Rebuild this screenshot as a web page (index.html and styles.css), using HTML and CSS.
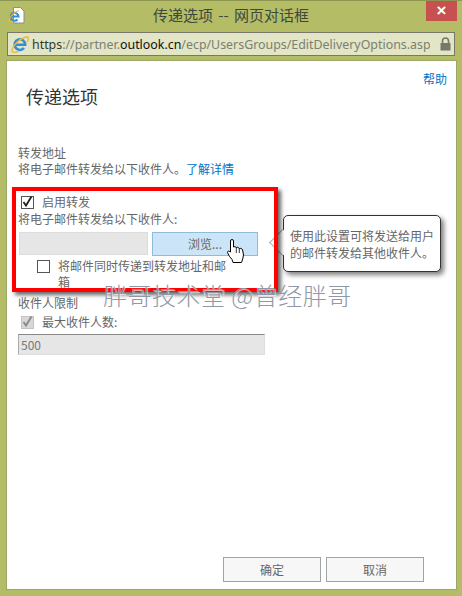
FILE: index.html
```html
<!DOCTYPE html>
<html lang="zh-CN">
<head>
  <meta charset="UTF-8">
  <title>传递选项 -- 网页对话框</title>
  <link rel="stylesheet" href="styles.css">
</head>
<body>
  <div class="window">
    <div class="titlebar">
      <svg class="page-icon" width="17" height="17" viewBox="0 0 17 17">
        <path d="M5.5 .5h7l3.5 3.5v12h-10.500z" fill="#fff" stroke="#8a8f90"/>
        <path d="M2.500 9.500h8a4 4 0 1 0 -1 3" fill="none" stroke="#2f8fd8" stroke-width="2"/>
        <path d="M.8 14c0-3 5-9 10-10.500M.8 14c1 1.500 3 1 4.500 .2" fill="none" stroke="#f2b632" stroke-width="1.200"/>
      </svg>
      <div class="title">传递选项 -- 网页对话框</div>
      <div class="close">×</div>
    </div>
    <div class="addressbar">
      <svg class="ie-icon" width="18" height="18" viewBox="0 0 18 18">
        <path d="M3.800 9.800h10.400a5.300 5.300 0 1 0 -1.200 3.200" fill="none" stroke="#2f8fd8" stroke-width="2.600"/>
        <path d="M.8 16c0-4 7-12 14-14 3-1 3 2 1.500 5M.8 16c1 2 4 1.500 6.500 .3" fill="none" stroke="#f2b632" stroke-width="1.400"/>
      </svg>
      <div class="url"><span class="dim-dark">https</span><span class="dim">://partner.</span><span class="host">outlook.cn</span><span class="dim">/ecp/UsersGroups/EditDeliveryOptions.aspx</span></div>
      <svg class="lock" width="11" height="14" viewBox="0 0 11 14">
        <path d="M2.500 6V4a3 3 0 0 1 6 0v2" fill="none" stroke="#77776a" stroke-width="1.600"/>
        <rect x="0.500" y="6" width="10" height="7.500" fill="#77776a"/>
      </svg>
    </div>
    <div class="content">
      <a class="help">帮助</a>
      <h1>传递选项</h1>
      <div class="section-title">转发地址</div>
      <div class="line">将电子邮件转发给以下收件人。<a class="link">了解详情</a></div>

      <div class="highlight">
        <label class="check-row">
          <span class="check"><svg class="tick" width="13" height="13" viewBox="0 0 13 13"><path d="M2.500 6l2.500 3.500L10.500 .5" fill="none" stroke="#222" stroke-width="1.800"/></svg></span>
          启用转发
        </label>
        <div class="line">将电子邮件转发给以下收件人:</div>
        <div class="browse-row">
          <div class="input-empty"></div>
          <div class="browse">浏览...</div>
        </div>
        <label class="check-row wrap"><span class="check"></span><span class="wrap-text">将邮件同时传递到转发地址和邮箱</span></label>
        <svg class="cursor" width="17" height="24" viewBox="0 0 17 24">
          <path d="M3.500 13V2Q3.500 .5 5 .5T6.500 2V8Q8 7 9.300 8.500 10.800 7.500 12.300 9.500 13.800 8.800 15.500 10.500L16.500 16Q16 20 14.500 23.500H6L5 20.500Q2 17.500 .5 13.500 .5 11 3.500 13Z" fill="#fff" stroke="#000"/>
          <path d="M9.300 8.500V14M12.300 9.500V14" fill="none" stroke="#000" stroke-width="0.800"/>
        </svg>
      </div>

      <div class="tooltip">
        <span class="tip-arrow"></span>
        <span class="tip-text">使用此设置可将发送给用户的邮件转发给其他收件人。</span>
      </div>

      <div class="watermark">胖哥技术堂 @曾经胖哥</div>

      <div class="section-title limit">收件人限制</div>
      <label class="check-row disabled">
        <span class="check disabled-box"><svg class="tick" width="13" height="13" viewBox="0 0 13 13"><path d="M2.500 6l2.500 3.500L10.500 .5" fill="none" stroke="#888" stroke-width="1.800"/></svg></span>
        最大收件人数:
      </label>
      <div class="input-value">500</div>

      <div class="actions">
        <div class="action">确定</div>
        <div class="action">取消</div>
      </div>
    </div>
  </div>
</body>
</html>
```

FILE: styles.css
```css
* {
  box-sizing: border-box;
}
html, body {
  margin: 0;
  height: 100%;
}
body {
  font-family: "Noto Sans CJK SC", "Liberation Sans", sans-serif;
  font-size: 12px;
  color: #666;
}
.window {
  width: 462px;
  height: 596px;
  background: #b5bc66;
  border-top: 1px solid #8d9650;
  overflow: hidden;
}
.titlebar {
  height: 31px;
  display: flex;
  align-items: center;
  position: relative;
  padding-left: 8px;
}
.page-icon {
  margin-top: -2px;
}
.title {
  position: absolute;
  left: 0;
  right: 0;
  text-align: center;
  font-size: 15px;
  word-spacing: 2px;
  color: #3c4a3c;
  margin-top: -4px;
}
.close {
  position: absolute;
  top: 0;
  right: 5px;
  width: 31px;
  height: 20px;
  background: #c75050;
  color: #fff;
  font: bold 17px/19px "Liberation Sans", sans-serif;
  text-align: center;
}
.addressbar {
  height: 24px;
  margin: 0 7px;
  background: #e2e5c6;
  border: 1px solid #77776a;
  display: flex;
  align-items: center;
  padding-left: 3px;
  gap: 3px;
}
.url {
  flex: 1;
  font-family: "Noto Sans", "Liberation Sans", sans-serif;
  font-size: 12.4px;
  white-space: nowrap;
  overflow: hidden;
}
.dim {
  color: #7c8070;
}
.dim-dark {
  color: #33382e;
}
.host {
  color: #111;
}
.lock {
  margin: 0 3px 0 7px;
  flex: none;
}
.content {
  width: 451px;
  height: 530px;
  margin: 4px 0 0 6px;
  background: #fff;
  border: 1px solid #9da56a;
  position: relative;
  padding: 10px 0 0 11px;
}
.help {
  position: absolute;
  top: 10px;
  right: 9px;
  line-height: 16px;
  color: #0072c6;
}
.link {
  color: #0072c6;
}
h1 {
  margin: 13px 0 0 8px;
  font-size: 18px;
  font-weight: 400;
  line-height: 24px;
  color: #333;
}
.section-title {
  margin-top: 37px;
  line-height: 16px;
}
.line {
  line-height: 16px;
}
.highlight {
  position: relative;
  z-index: 2;
  width: 266px;
  height: 105px;
  margin: 10px 0 0 -6px;
  border: 4px solid #f00;
  box-shadow: 3px 3px 4px rgba(0, 0, 0, 0.6);
  padding: 2px 0 0 2px;
}
.check-row {
  display: flex;
  align-items: center;
  gap: 8px;
  line-height: 18px;
  padding-left: 3px;
}
.check {
  width: 13px;
  height: 13px;
  border: 1px solid #555;
  flex: none;
  position: relative;
}
.tick {
  position: absolute;
  left: -1px;
  top: -1px;
}
.browse-row {
  display: flex;
  align-items: flex-start;
  gap: 4px;
  margin-top: 5px;
}
.input-empty {
  width: 129px;
  height: 23px;
  margin-left: 1px;
  background: #e6e6e6;
  border: 1px solid #dcdcdc;
}
.browse {
  width: 106px;
  height: 24px;
  background: #cce4f7;
  border: 1px solid #8fbcd8;
  text-align: center;
  line-height: 22px;
}
.wrap {
  align-items: flex-start;
  margin-top: 2px;
  padding-left: 19px;
}
.wrap .check {
  margin-top: 2px;
}
.wrap-text {
  width: 172px;
  line-height: 16px;
}
.cursor {
  position: absolute;
  left: 211px;
  top: 48px;
}
.tooltip {
  position: absolute;
  z-index: 1;
  left: 276px;
  top: 154px;
  width: 158px;
  height: 57px;
  background: #fff;
  border: 1px solid #333;
  border-radius: 5px;
  box-shadow: 3px 3px 5px rgba(0, 0, 0, 0.5);
  padding: 11px 0 0 6px;
  line-height: 17px;
}
.tip-text {
  position: relative;
}
.tip-arrow {
  position: absolute;
  left: -11px;
  top: 17px;
  width: 19px;
  height: 19px;
  background: #fff;
  border-left: 1px solid #aaa;
  border-bottom: 1px solid #aaa;
  transform: rotate(45deg);
}
.watermark {
  position: absolute;
  z-index: 3;
  left: 96px;
  top: 222px;
  font-size: 24px;
  font-weight: 300;
  letter-spacing: 0.5px;
  line-height: 24px;
  color: #8f98a6;
  white-space: nowrap;
  text-shadow: 1px 1px 1px rgba(255, 255, 255, 0.8);
}
.section-title.limit {
  margin-top: 3px;
}
.disabled {
  margin-top: 2px;
}
.disabled-box {
  background: #d8d8d8;
  border-color: #c4c4c4;
}
.input-value {
  width: 247px;
  height: 21px;
  margin-top: 3px;
  background: #e6e6e6;
  border: 1px solid #ddd;
  border-top: 1px solid #888;
  border-left: 1px solid #aaa;
  padding-left: 2px;
  line-height: 20px;
  color: #777;
}
.actions {
  position: absolute;
  right: 32px;
  bottom: 7px;
  display: flex;
  gap: 5px;
}
.action {
  width: 98px;
  height: 25px;
  background: #f7f7f7;
  border: 1px solid #9da5a5;
  text-align: center;
  line-height: 23px;
}
```
